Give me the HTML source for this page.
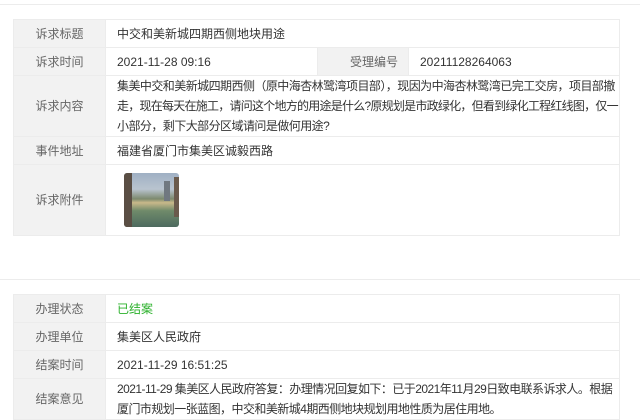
<!DOCTYPE html><html><head><meta charset="utf-8"><style>
body{margin:0;width:640px;height:420px;overflow:hidden;background:#fff;font-family:"Liberation Sans","Noto Sans CJK SC",sans-serif;font-size:12px;color:#333;position:relative}
.hl{position:absolute;left:0;width:640px;height:1px;background:#ececec}
table{position:absolute;left:13px;width:607px;border-collapse:collapse;table-layout:fixed}
td{border:1px solid #ececec;padding:0 10px;height:27px;line-height:20px}
td.l{background:#f2f2f2;color:#666;text-align:center}
td.v{padding-left:11px;padding-right:0}
.t{letter-spacing:-0.55px;white-space:nowrap;overflow:hidden}
.t2{letter-spacing:-0.75px}
</style></head><body>
<div class="hl" style="top:4px"></div>
<table style="top:19px">
<colgroup><col style="width:92px"><col style="width:212px"><col style="width:91px"><col></colgroup>
<tr><td class="l">诉求标题</td><td class="v" colspan="3">中交和美新城四期西侧地块用途</td></tr>
<tr><td class="l">诉求时间</td><td class="v">2021-11-28 09:16</td><td class="l" style="text-align:right">受理编号</td><td class="v">20211128264063</td></tr>
<tr><td class="l" style="height:58px">诉求内容</td><td class="v t" colspan="3">集美中交和美新城四期西侧（原中海杏林鹭湾项目部），现因为中海杏林鹭湾已完工交房，项目部撤<br><span class="t2">走，现在每天在施工，请问这个地方的用途是什么?原规划是市政绿化，但看到绿化工程红线图，仅一</span><br>小部分，剩下大部分区域请问是做何用途?</td></tr>
<tr><td class="l">事件地址</td><td class="v" colspan="3">福建省厦门市集美区诚毅西路</td></tr>
<tr><td class="l" style="height:70px">诉求附件</td><td class="v" colspan="3"><div style="width:55px;height:54px;border-radius:3px;margin-left:7px;background:linear-gradient(180deg,#9fb0c4 0%,#b9c4cf 30%,#7c8a6e 48%,#c9b98a 55%,#6f8a6a 70%,#4d6a5f 100%);position:relative;overflow:hidden"><div style="position:absolute;left:0;top:0;width:8px;height:54px;background:#5a4e44"></div><div style="position:absolute;left:40px;top:8px;width:6px;height:20px;background:#707880"></div><div style="position:absolute;left:50px;top:4px;width:5px;height:40px;background:#6a5a4c"></div></div></td></tr>
</table>
<div class="hl" style="top:279px"></div>
<table style="top:294px">
<colgroup><col style="width:92px"><col></colgroup>
<tr><td class="l">办理状态</td><td class="v" style="color:#2bb12b">已结案</td></tr>
<tr><td class="l">办理单位</td><td class="v">集美区人民政府</td></tr>
<tr><td class="l">结案时间</td><td class="v">2021-11-29 16:51:25</td></tr>
<tr><td class="l" style="height:38px">结案意见</td><td class="v t">2021-11-29 集美区人民政府答复：办理情况回复如下：已于2021年11月29日致电联系诉求人。根据<br>厦门市规划一张蓝图，中交和美新城4期西侧地块规划用地性质为居住用地。</td></tr>
</table>
</body></html>
